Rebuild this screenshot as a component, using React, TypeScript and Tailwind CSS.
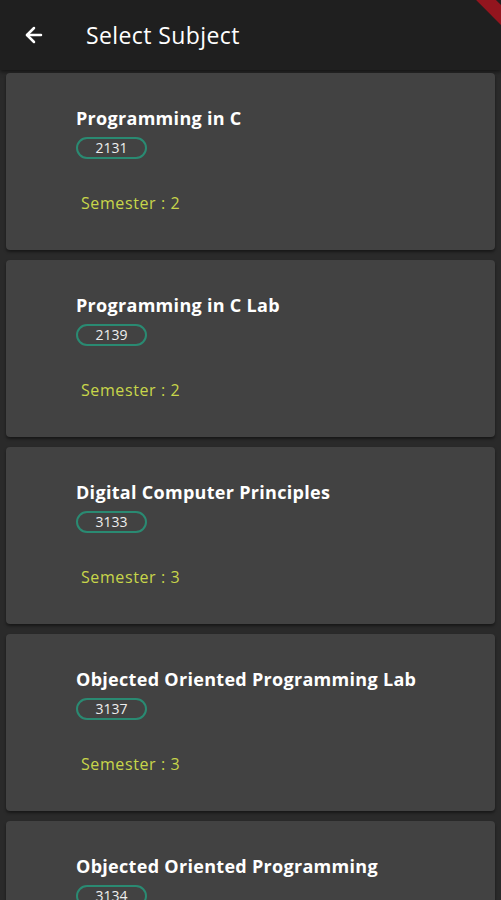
import { ArrowLeft } from 'lucide-react';

const subjects = [
  { name: 'Programming in C', code: '2131', semester: 2 },
  { name: 'Programming in C Lab', code: '2139', semester: 2 },
  { name: 'Digital Computer Principles', code: '3133', semester: 3 },
  { name: 'Objected Oriented Programming Lab', code: '3137', semester: 3 },
  { name: 'Objected Oriented Programming', code: '3134', semester: 3 },
];

function SubjectCard({ name, code, semester }: { name: string; code: string; semester: number }) {
  return (
    <div className="mx-[6px] h-[177px] shrink-0 rounded-[4px] bg-[#424242] pt-[35px] pl-[70px] shadow-[0_2px_3px_rgba(0,0,0,0.45)]">
      <h3 className="text-[18px] leading-[20px] font-bold tracking-[0.3px] text-white">{name}</h3>
      <div className="mt-[9px] flex h-[22px] w-[71px] items-center justify-center rounded-full border-2 border-[#2a8a72] text-[14px] leading-none text-[#eeeeee]">
        {code}
      </div>
      <p className="mt-[34px] pl-[5px] text-[16px] leading-[20px] tracking-[0.6px] text-[#c8d64a]">Semester : {semester}</p>
    </div>
  );
}

export default function App() {
  return (
    <div className="relative h-[900px] w-full overflow-hidden bg-[#2a2a2a] font-['Open_Sans',sans-serif]">
      <header className="flex h-[70px] items-center bg-[#1f1f1f] shadow-[0_2px_4px_rgba(0,0,0,0.5)]">
        <button className="ml-[22px] flex h-6 w-6 items-center justify-center text-white">
          <ArrowLeft size={24} strokeWidth={2.5} />
        </button>
        <h1 className="ml-[40px] text-[23px] font-medium tracking-[0.4px] text-white">Select Subject</h1>
      </header>
      <div className="flex flex-col gap-[10px] pt-[3px]">
        {subjects.map((s) => (
          <SubjectCard key={s.code} {...s} />
        ))}
      </div>
      <div className="absolute top-[8px] right-[-50px] h-[14px] w-[100px] rotate-45 bg-[#a0141e]/90" />
    </div>
  );
}
